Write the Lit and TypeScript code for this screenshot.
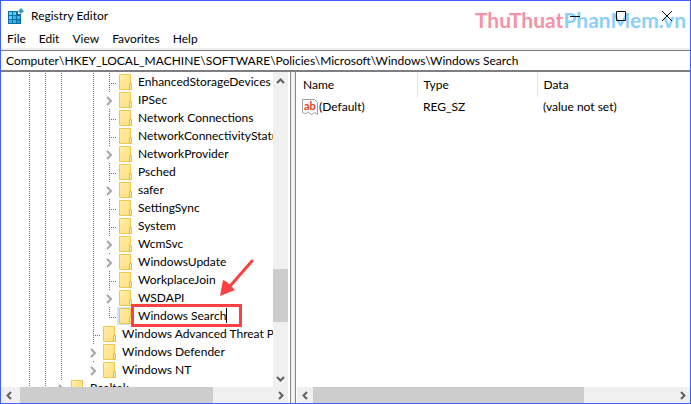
import { LitElement, html, svg, css, nothing } from "lit";
import { customElement, property } from "lit/decorators.js";

type Cell = "line" | "none" | "tee" | "elbow" | "chevron";
interface Item { name: string; cells: Cell[]; editing?: boolean; }

const base: Cell[] = ["line", "line", "line", "none", "line"];
const leaf = (name: string): Item => ({ name, cells: [...base, "tee"] });
const parent = (name: string): Item => ({ name, cells: [...base, "chevron"] });

const items: Item[] = [
  leaf("EnhancedStorageDevices"),
  parent("IPSec"),
  leaf("Network Connections"),
  leaf("NetworkConnectivityStatusIndicator"),
  parent("NetworkProvider"),
  leaf("Psched"),
  parent("safer"),
  leaf("SettingSync"),
  leaf("System"),
  parent("WcmSvc"),
  parent("WindowsUpdate"),
  leaf("WorkplaceJoin"),
  parent("WSDAPI"),
  { name: "Windows Search", cells: [...base, "elbow"], editing: true },
  { name: "Windows Advanced Threat Protection", cells: ["line", "line", "line", "none", "tee"] },
  { name: "Windows Defender", cells: ["line", "line", "line", "none", "chevron"] },
  { name: "Windows NT", cells: ["line", "line", "line", "none", "chevron"] },
  { name: "Realtek", cells: ["line", "line", "chevron"] },
];

@customElement("scroll-bar")
class ScrollBar extends LitElement {
  @property() direction = "horizontal";
  @property({ type: Number }) before = 0;
  @property({ type: Number }) thumb = 50;

  static styles = css`
    :host { display: flex; background: #f0f0f0; min-width: 0; min-height: 0; }
    :host([direction="vertical"]) { flex-direction: column; }
    button { flex: 0 0 16px; border: 0; padding: 0; background: none; display: flex; align-items: center; justify-content: center; }
    :host([direction="vertical"]) button { flex-basis: 18px; }
    .track { flex: 1; display: flex; flex-direction: inherit; min-width: 0; min-height: 0; }
    .thumb { background: #cdcdcd; }
    svg { display: block; fill: none; stroke: #606060; stroke-width: 2; }
  `;

  private arrow(back: boolean) {
    const v = this.direction === "vertical";
    const d = v ? (back ? "M1 6 4.500 2.500 8 6" : "M1 3 4.500 6.500 8 3") : (back ? "M6 1 2.500 4.500 6 8" : "M3 1 6.500 4.500 3 8");
    return html`<button aria-label=${back ? "Scroll back" : "Scroll forward"}><svg width="9" height="9" viewBox="0 0 9 9"><path d=${d} /></svg></button>`;
  }

  render() {
    return html`${this.arrow(true)}
      <div class="track">
        <div style="flex: 0 0 ${this.before}%"></div>
        <div class="thumb" style="flex: 0 0 ${this.thumb}%"></div>
      </div>
      ${this.arrow(false)}`;
  }
}

@customElement("registry-tree")
class RegistryTree extends LitElement {
  static styles = css`
    :host { display: block; overflow: hidden; min-width: 0; min-height: 0; }
    ul { list-style: none; margin: 0; padding: 1px 0 0 20px; }
    li { display: flex; height: 18px; align-items: center; white-space: nowrap; position: relative; }
    .cell { flex: 0 0 16px; height: 18px; }
    .cell svg { display: block; }
    .dots { stroke: #707070; stroke-dasharray: 1 1; fill: none; }
    .chevron { stroke: #a6a6a6; stroke-width: 2; fill: none; }
    .folder { flex: 0 0 15px; height: 18px; padding-left: 2px; margin-right: 4px; }
    .selected { background: #cce8ff; }
    .name { line-height: 18px; }
    .rename { position: absolute; left: 110px; top: -3px; box-sizing: border-box; width: 111px; height: 23px;
      border: 3px solid #fb4141; background: #fff; display: flex; align-items: center; padding-left: 4px; }
    .rename input { field-sizing: content; border: 0; outline: 0; padding: 0; margin: 0; font: inherit; color: inherit; background: none; }
    .caret { width: 1px; height: 15px; background: #000; }
    .pointer { position: absolute; left: 197px; top: -50px; }
  `;

  private guide(kind: Cell) {
    if (kind === "none") return nothing;
    return html`<svg width="16" height="18" viewBox="0 0 16 18">
      ${kind === "line" || kind === "tee" ? svg`<path class="dots" d="M8.500 0V18" />` : nothing}
      ${kind === "elbow" ? svg`<path class="dots" d="M8.500 0V11" />` : nothing}
      ${kind === "tee" || kind === "elbow" ? svg`<path class="dots" d="M10 10.500H16" />` : nothing}
      ${kind === "chevron" ? svg`<path class="dots" d="M8.500 0V1" /><path class="chevron" d="M6 6 10 10 6 14" />` : nothing}
    </svg>`;
  }

  private row(item: Item) {
    return html`<li>
      ${item.cells.map((c) => html`<span class="cell">${this.guide(c)}</span>`)}
      <svg class="folder ${item.editing ? "selected" : ""}" width="15" height="18" viewBox="0 0 15 18">
        <defs><linearGradient id="g" x2="1" y2="1"><stop stop-color="#ffeda8" /><stop offset="1" stop-color="#ffdf7c" /></linearGradient></defs>
        <path d="M.5 1.500h11v15H.5z" fill="url(#g)" stroke="#edc94f" />
        <path d="M10.500 10.500h2v6h-2z" fill="#ffe69a" stroke="#e8c040" />
      </svg>
      ${item.editing
        ? html`<span class="rename"><input aria-label="Key name" .value=${item.name} /><span class="caret"></span></span>
          <svg class="pointer" width="40" height="42" viewBox="0 0 40 42">
            <path d="M34 4 13 28" stroke="#fb4141" stroke-width="3" stroke-linecap="round" />
            <path d="M2 39 5 23 9 25 14 30 17 33z" fill="#fb4141" />
          </svg>`
        : html`<span class="name">${item.name}</span>`}
    </li>`;
  }

  render() {
    return html`<ul>${items.map((i) => this.row(i))}</ul>`;
  }
}

@customElement("app-root")
class AppRoot extends LitElement {
  static styles = css`
    :host { display: flex; flex-direction: column; box-sizing: border-box; height: 100vh; min-height: 300px; position: relative;
      border: 1px solid #435fff; background: #fff; color: #000; font: 12px/18px Lato, "Open Sans", sans-serif; overflow: hidden; }
    header { display: flex; height: 29px; align-items: center; padding-left: 7px; }
    h1 { font: inherit; margin: 0 auto 0 7px; }
    .window { display: flex; position: relative; z-index: 1; }
    .window button { width: 46px; height: 26px; border: 0; padding: 0; background: none; display: flex; align-items: center; justify-content: center; }
    .window svg { fill: none; stroke: #111; }
    .watermark { position: absolute; right: 4px; top: 5px; font: bold 21px/28px Lato, sans-serif; color: #8bcff8; pointer-events: none; }
    .watermark b { color: #f692a5; font-weight: inherit; }
    nav { display: flex; gap: 13px; height: 20px; padding-left: 6px; border-bottom: 2px solid #f0f0f0; box-sizing: border-box; }
    nav button { border: 0; background: none; padding: 0; font: inherit; color: inherit; }
    .address { border: 0; border-top: 1px solid #7a7a7a; border-bottom: 2px solid #7e7e82; outline: 0; box-sizing: border-box; height: 22px;
      width: 100%; padding: 0 5px; margin: 0; font: inherit; color: inherit; background: #fff; border-radius: 0; }
    main { flex: 1; min-height: 0; display: grid; grid-template-columns: 289px 6px minmax(0, 1fr); }
    .left { display: grid; grid-template: minmax(0, 1fr) 16px / minmax(0, 1fr) 15px; padding-right: 2px; min-height: 0; }
    .left scroll-bar[direction="horizontal"] { grid-column: 1 / 3; }
    .splitter { background: #f0f0f0; border: solid #828790; border-width: 0 1px; }
    .right { display: flex; flex-direction: column; min-height: 0; padding-left: 1px; }
    .values { flex: 1; min-height: 0; overflow: hidden; }
    .right scroll-bar { flex: 0 0 16px; }
    table { border-collapse: collapse; table-layout: fixed; width: 100%; }
    th, td { text-align: left; font-weight: normal; padding: 0 0 0 6px; }
    th { height: 25px; border-right: 1px solid #e5e5e5; }
    th:last-child { border-right: 0; }
    td { height: 20px; }
    .col { width: 120px; }
    .value { display: flex; align-items: center; gap: 1px; }
    .string { margin-left: -1px; }
  `;

  render() {
    return html`
      <header>
        <svg width="16" height="16" viewBox="0 0 16 16">
          <path d="M0 3h10v3h3v10H0z" fill="#0e6fa8" />
          <path d="M1 4h3v3H1zM5 4h3v3H5zM1 8h3v3H1z" fill="#5fd0f5" />
          <path d="M5 8h3v3H5zM9 8h3v3H9zM1 12h3v3H1zM5 12h3v3H5z" fill="#35b5ea" />
          <path d="M9 12h3v3H9z" fill="#1a92d0" />
          <path d="M13 0 16 3 13 6 10 3z" fill="#3e9cc9" />
        </svg>
        <h1>Registry Editor</h1>
        <div class="window">
          <button aria-label="Minimize"><svg width="10" height="10"><path d="M0 5.500H10" /></svg></button>
          <button aria-label="Maximize"><svg width="10" height="10"><path d="M.5 .5h9v9h-9z" /></svg></button>
          <button aria-label="Close"><svg width="10" height="10"><path d="M0 0 10 10M10 0 0 10" /></svg></button>
        </div>
      </header>
      <div class="watermark"><b>ThuThuat</b>PhanMem.vn</div>
      <nav>
        ${["File", "Edit", "View", "Favorites", "Help"].map((m) => html`<button>${m}</button>`)}
      </nav>
      <input class="address" aria-label="Address" .value=${"Computer\\HKEY_LOCAL_MACHINE\\SOFTWARE\\Policies\\Microsoft\\Windows\\Windows Search"} />
      <main>
        <section class="left">
          <registry-tree></registry-tree>
          <scroll-bar direction="vertical" before="64" thumb="19"></scroll-bar>
          <scroll-bar direction="horizontal" before="1" thumb="76"></scroll-bar>
        </section>
        <div class="splitter"></div>
        <section class="right">
          <div class="values">
            <table>
              <colgroup><col class="col" /><col class="col" /><col /></colgroup>
              <thead><tr><th>Name</th><th>Type</th><th>Data</th></tr></thead>
              <tbody><tr>
                <td><span class="value">
                  <svg class="string" width="16" height="16" viewBox="0 0 16 16">
                    <path d="M.5 .5h12l3 3v12l-3-2-3 2-3-2-3 1-3-1z" fill="#fff" stroke="#a0a0a0" />
                    <text x="2" y="11" font-size="11" font-weight="bold" fill="#d9432a">ab</text>
                  </svg>(Default)</span></td>
                <td>REG_SZ</td><td>(value not set)</td>
              </tr></tbody>
            </table>
          </div>
          <scroll-bar direction="horizontal" before="0" thumb="75"></scroll-bar>
        </section>
      </main>`;
  }
}
